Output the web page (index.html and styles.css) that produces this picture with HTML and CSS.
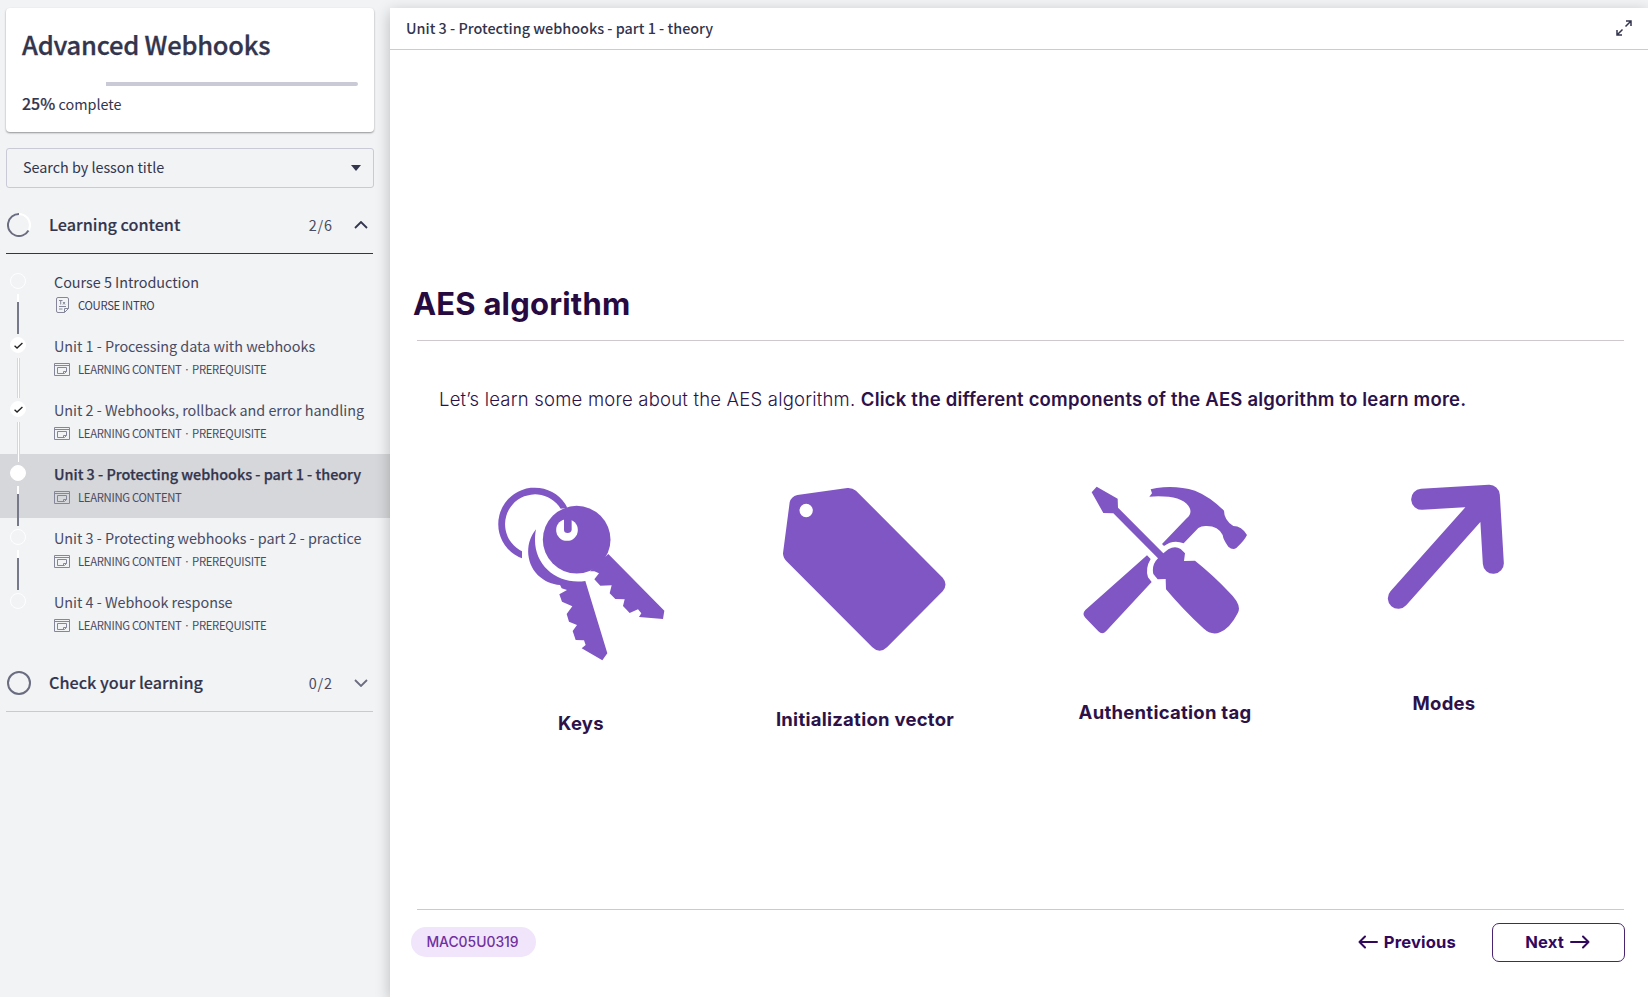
FILE: index.html
```html
<!DOCTYPE html>
<html lang="en">
<head>
<meta charset="utf-8">
<title>Advanced Webhooks</title>
<link rel="stylesheet" href="styles.css">
</head>
<body>
<div class="app">
  <aside class="sidebar">
    <section class="course-card">
      <h1 class="course-title">Advanced Webhooks</h1>
      <div class="progress"><div class="progress-rest"></div></div>
      <p class="progress-label"><b>25%</b> complete</p>
    </section>
    <div class="search"><span class="search-text">Search by lesson title</span>
      <svg class="caret" viewBox="0 0 10 6"><path d="M0 0H10L5 6Z"/></svg>
    </div>
    <div class="section-head section-open">
      <svg class="ring" viewBox="0 0 24 24"><circle cx="12" cy="12" r="11" fill="none" stroke="#fff" stroke-width="2"/><path d="M12 1A11 11 0 1 0 21.500 17.500" fill="none" stroke="#6b6c80" stroke-width="2"/></svg>
      <h2 class="section-title">Learning content</h2>
      <span class="count">2/6</span>
      <svg class="chevron" viewBox="0 0 14 8"><path d="M1 7L7 1L13 7"/></svg>
    </div>
    <ol class="lessons">
      <li class="lesson todo intro-lesson">
        <i class="dot"></i><i class="line"></i>
        <div class="lesson-title">Course 5 Introduction</div>
        <div class="meta"><svg class="doc-icon" viewBox="0 0 13 16"><path d="M8.500 15.500H2Q.5 15.500 .5 14V2Q.5 .5 2 .5H11Q12.500 .5 12.500 2V11.500L8.500 15.500V11.500H12.500M3 3.500H6.500M4.700 3.500V7.500M7 5L9 7.500M9 5L7 7.500M3 9.500H10M3 12H6.500"/></svg><span class="tag">COURSE INTRO</span></div>
      </li>
      <li class="lesson done">
        <i class="dot"><svg viewBox="0 0 8 6"><path d="M.5 3.200L2.700 5.200L7.500 .7"/></svg></i><i class="line"></i>
        <div class="lesson-title">Unit 1 - Processing data with webhooks</div>
        <div class="meta"><svg class="win-icon" viewBox="0 0 16 13"><path d="M.5 .5H15.500V12.500H.5ZM.5 2.500H15.500M3.500 4.500H12.500V8.500L10.500 10.500H3.500ZM12.500 8.500H9.500V10.500"/></svg><span class="tag">LEARNING CONTENT · PREREQUISITE</span></div>
      </li>
      <li class="lesson done">
        <i class="dot"><svg viewBox="0 0 8 6"><path d="M.5 3.200L2.700 5.200L7.500 .7"/></svg></i><i class="line"></i>
        <div class="lesson-title">Unit 2 - Webhooks, rollback and error handling</div>
        <div class="meta"><svg class="win-icon" viewBox="0 0 16 13"><path d="M.5 .5H15.500V12.500H.5ZM.5 2.500H15.500M3.500 4.500H12.500V8.500L10.500 10.500H3.500ZM12.500 8.500H9.500V10.500"/></svg><span class="tag">LEARNING CONTENT · PREREQUISITE</span></div>
      </li>
      <li class="lesson current">
        <i class="dot"></i><i class="line"></i>
        <div class="lesson-title">Unit 3 - Protecting webhooks - part 1 - theory</div>
        <div class="meta"><svg class="win-icon" viewBox="0 0 16 13"><path d="M.5 .5H15.500V12.500H.5ZM.5 2.500H15.500M3.500 4.500H12.500V8.500L10.500 10.500H3.500ZM12.500 8.500H9.500V10.500"/></svg><span class="tag">LEARNING CONTENT</span></div>
      </li>
      <li class="lesson todo">
        <i class="dot"></i><i class="line"></i>
        <div class="lesson-title">Unit 3 - Protecting webhooks - part 2 - practice</div>
        <div class="meta"><svg class="win-icon" viewBox="0 0 16 13"><path d="M.5 .5H15.500V12.500H.5ZM.5 2.500H15.500M3.500 4.500H12.500V8.500L10.500 10.500H3.500ZM12.500 8.500H9.500V10.500"/></svg><span class="tag">LEARNING CONTENT · PREREQUISITE</span></div>
      </li>
      <li class="lesson todo">
        <i class="dot"></i>
        <div class="lesson-title">Unit 4 - Webhook response</div>
        <div class="meta"><svg class="win-icon" viewBox="0 0 16 13"><path d="M.5 .5H15.500V12.500H.5ZM.5 2.500H15.500M3.500 4.500H12.500V8.500L10.500 10.500H3.500ZM12.500 8.500H9.500V10.500"/></svg><span class="tag">LEARNING CONTENT · PREREQUISITE</span></div>
      </li>
    </ol>
    <div class="section-head">
      <svg class="ring" viewBox="0 0 24 24"><circle cx="12" cy="12" r="11" fill="none" stroke="#6b6c80" stroke-width="2"/></svg>
      <h2 class="section-title">Check your learning</h2>
      <span class="count">0/2</span>
      <svg class="chevron muted" viewBox="0 0 14 8"><path d="M1 1L7 7L13 1"/></svg>
    </div>
  </aside>
  <main class="player">
    <header class="player-head">
      <span class="player-title">Unit 3 - Protecting webhooks - part 1 - theory</span>
      <svg class="expand" viewBox="0 0 16 16"><path d="M9.500 6.500L15 1M10 1H15V6M6.500 9.500L1 15M1 10V15H6"/></svg>
    </header>
    <article class="slide">
      <h2 class="slide-title"><span>AES algorithm</span></h2>
      <p class="intro"><span class="intro-light">Let’s learn some more about the AES algorithm.</span> <strong>Click the different components of the AES algorithm to learn more.</strong></p>
      <div class="topics">
        <figure class="topic keys">
          <svg viewBox="0 0 600 600" width="200" height="200"><path d="M126 265A109.500 109.500 0 1 1 262 113L242 116A90 90 0 1 0 126 244Z"/><circle cx="290" cy="209" r="101.500"/><path d="M330 304L343 304L357 310L343 328L361 347L395 346L389 370L406 387L434 388L429 408L449 429L474 418L484 430L477 441L549 447L553 422L385 252Z"/><circle cx="261" cy="180" r="32.500" fill="#fff"/><path d="M252 140H275V180Q273 189 263 189Q252 189 252 180Z"/><path d="M168 178C137 215 135 275 173 315C195 335 215 343 240 345L245 355L261 360L238 373L246 395L277 409L260 432L267 455L291 465L278 483L287 510L312 511L317 525L305 535L367 571L382 550L316 333C235 345 165 290 165 210C165 198 166 188 168 178Z"/></svg>
          <figcaption>Keys</figcaption>
        </figure>
        <figure class="topic vector">
          <svg viewBox="0 0 630 600" width="210" height="200"><path fill-rule="evenodd" d="M112 75L262 54Q277 53 288 62L548 323Q565 343 548 364L381 532Q359 553 337 532L79 273Q69 263 69 250L89 97Q93 80 112 75ZM158.500 121.500A20 20 0 1 0 118.500 121.500A20 20 0 1 0 158.500 121.500Z"/></svg>
          <figcaption>Initialization vector</figcaption>
        </figure>
        <figure class="topic auth">
          <svg viewBox="0 0 630 600" width="210" height="200"><path d="M95 67L110 50L173 86L174 113L310 250L325 238Q345 226 362 237L375 250L372 273L405 272Q460 316 506 365Q548 405 533 430Q510 475 480 487Q455 498 430 475Q370 420 318 358L317 327L293 328L280 312Q274 285 294 265L160 130L130 129Z"/><path d="M268 80L276 70L272 58L290 54Q350 46 405 62Q450 80 492 122Q492 150 520 168Q545 168 561 195Q553 212 529 234Q518 242 505 230Q490 210 488 195Q475 168 440 168Q425 167 415 174L371 220Q340 207 312 228L306 222L380 145Q400 128 385 107Q360 74 268 80Z"/><path d="M261 256L272 267Q255 295 264 322L275 336L138 484Q127 496 115 484L76 443Q65 432 76 420Z"/></svg>
          <figcaption>Authentication tag</figcaption>
        </figure>
        <figure class="topic modes">
          <svg viewBox="0 0 480 600" width="160" height="200"><path class="arrow" d="M155 88L358 76L370 280M85 385L345 93"/></svg>
          <figcaption>Modes</figcaption>
        </figure>
      </div>
      <footer class="slide-foot">
        <span class="code">MAC05U0319</span>
        <button class="prev"><svg viewBox="0 0 20 14"><path d="M19 7H1.500M7 1.500L1.500 7L7 12.500"/></svg><span>Previous</span></button>
        <button class="next"><span>Next</span><svg viewBox="0 0 20 14"><path d="M1 7H18.500M13 1.500L18.500 7L13 12.500"/></svg></button>
      </footer>
    </article>
  </main>
</div>
</body>
</html>
```
FILE: styles.css
```css
* { box-sizing: border-box; margin: 0; padding: 0; }

body {
  height: 997px;
  overflow: hidden;
  background: #f1f3f5;
  color: #33354d;
  font-family: "Noto Sans CJK JP", "Noto Sans", sans-serif;
}

.app { display: flex; height: 997px; }

/* Sidebar */
.sidebar { width: 390px; flex: none; padding-top: 8px; }

.course-card {
  width: 368px;
  height: 124px;
  margin-left: 6px;
  padding: 20px 16px 0;
  background: #fff;
  border-radius: 4px;
  box-shadow: 0 1px 2px rgba(0, 0, 0, .4);
}
.course-title { font-size: 25.500px; line-height: 32px; font-weight: 500; letter-spacing: -.22px; white-space: nowrap; -webkit-text-stroke: .3px; }
.progress { display: flex; justify-content: flex-end; margin-top: 22px; height: 4px; }
.progress-rest { width: 252px; background: #c9cad6; border-radius: 0 2px 2px 0; }
.progress-label { margin-top: 7px; font-size: 14.400px; line-height: 20px; }
.progress-label b { font-size: 16px; font-weight: 500; -webkit-text-stroke: .2px; }

.search {
  display: flex;
  align-items: center;
  justify-content: space-between;
  width: 368px;
  height: 40px;
  margin: 16px 0 0 6px;
  padding: 0 12px 0 16px;
  border: 1px solid #c9cad6;
  border-radius: 3px;
  font-size: 14.400px;
}
.search-text { line-height: 20px; margin-top: -2px; letter-spacing: -.03px; }
.caret { width: 10px; height: 6px; fill: #33354d; }

.section-head {
  display: flex;
  align-items: center;
  width: 367px;
  height: 58px;
  margin-left: 6px;
  padding: 0 5px 0 1px;
  border-bottom: 1px solid #c9cacf;
}
.section-open { margin-top: 8px; border-color: #33354d; }
.ring { width: 24px; height: 24px; }
.section-title { flex: 1; margin: -2px 0 0 18px; font-size: 16.200px; line-height: 24px; font-weight: 500; -webkit-text-stroke: .15px; }
.count { font-size: 14.400px; line-height: 20px; letter-spacing: .9px; color: #4a4b62; }
.chevron { width: 14px; height: 8px; margin: 0 0 0 21px; fill: none; stroke: #33354d; stroke-width: 1.800; }
.muted { stroke: #6b6c80; }

.lessons { padding: 8px 0; list-style: none; }
.lesson { position: relative; height: 64px; padding: 10px 0 0 54px; color: #4a4b62; }
.intro-lesson { color: #3c3e55; }
.current { background: #d6d7da; }
.lesson-title { font-size: 14.400px; line-height: 20px; letter-spacing: -.03px; white-space: nowrap; }
.current .lesson-title { font-weight: 500; letter-spacing: 0; color: #33354d; -webkit-text-stroke: .25px; }
.meta { display: flex; align-items: center; gap: 8px; height: 18px; margin-top: 4px; font-size: 11.300px; line-height: 18px; letter-spacing: -.31px; }
.meta svg { fill: none; stroke: #85869a; stroke-width: 1; }
.win-icon { width: 16px; height: 13px; margin-top: 1px; }
.doc-icon { width: 13px; height: 16px; margin: 0 1px 0 2px; }
.dot {
  position: absolute;
  left: 10px;
  top: 11px;
  display: flex;
  align-items: center;
  justify-content: center;
  width: 16px;
  height: 16px;
  border: 1px solid #fff;
  border-radius: 50%;
}
.done .dot, .current .dot { background: #fff; }
.dot svg { width: 9px; height: 7px; fill: none; stroke: #222; stroke-width: 1.200; }
.line {
  position: absolute;
  z-index: 1;
  left: 17px;
  top: 32px;
  width: 3px;
  height: 40px;
  background: #fff;
  border: solid #d6d7da;
  border-width: 0 1px;
}
.todo .line, .current .line { background: linear-gradient(#fff 8px, #77788a 8px); border: 0; width: 2px; left: 17px; }

/* Player */
.player {
  position: relative;
  display: flex;
  flex-direction: column;
  flex: 1;
  margin-top: 8px;
  background: #fff;
  box-shadow: 0 4px 14px rgba(0, 0, 0, .24);
}
.player-head {
  display: flex;
  align-items: center;
  justify-content: space-between;
  height: 42px;
  padding: 0 16px 1px 16px;
  border-bottom: 1px solid #c9ccd2;
}
.player-title { font-size: 14.400px; line-height: 20px; font-weight: 500; }
.expand { width: 16px; height: 16px; fill: none; stroke: #33354d; stroke-width: 1.500; }

.slide { flex: 1; font-family: Inter, "Liberation Sans", sans-serif; color: #2c1248; }
.slide-title {
  margin: 234px 24px 0 27px;
  height: 57px;
  border-bottom: 1px solid #cfc8cd;
  color: #260a40;
  font-size: 31px;
  line-height: 40px;
  font-weight: 700;
  letter-spacing: .2px;
}
.slide-title span { margin-left: -4px; }
.intro { margin: 45px 0 0 49px; font-size: 18.500px; line-height: 26px; letter-spacing: .207px; white-space: nowrap; }
.intro-light { font-weight: 300; }
.intro strong { font-weight: 600; }

.topics { display: grid; grid-template-columns: 200px 220px 230px 160px; column-gap: 80px; justify-items: start; margin: 58px 0 0 90px; height: 280px; }
.topic { display: flex; flex-direction: column; align-items: center; fill: #8056c4; }
.topic svg { flex: none; }
.topic figcaption { font-size: 18.500px; line-height: 24px; font-weight: 700; letter-spacing: .26px; white-space: nowrap; }
.arrow { fill: none; stroke: #8056c4; stroke-width: 63; stroke-linecap: round; stroke-linejoin: round; }
.keys figcaption { margin: 41px 0 0 2px; }
.vector figcaption { margin-top: 37px; }
.auth figcaption { margin-top: 30px; }
.modes figcaption { margin: 21px 12px 0 0; }

.slide-foot {
  display: flex;
  align-items: center;
  margin: 159px 24px 0 27px;
  height: 65px;
  border-top: 1px solid #cfc8cd;
}
.code {
  margin: 0 auto 0 -6px;
  width: 125px;
  padding-right: 2px;
  border-radius: 15px;
  background: #f0e5fb;
  color: #7030a0;
  text-align: center;
  font-size: 13.900px;
  line-height: 30px;
  font-weight: 500;
}
button {
  display: flex;
  align-items: center;
  justify-content: center;
  gap: 6px;
  height: 39px;
  border: 0;
  background: none;
  color: #32085c;
  font: 700 16.600px/24px Inter, "Liberation Sans", sans-serif;
  letter-spacing: .15px;
}
button svg { width: 20px; height: 14px; fill: none; stroke: #32085c; stroke-width: 2; stroke-linecap: round; stroke-linejoin: round; }
.prev { margin-right: 36px; }
.next { width: 133px; margin-right: -1px; padding-right: 2px; border: 1.500px solid #4a2470; border-radius: 7px; }
```
